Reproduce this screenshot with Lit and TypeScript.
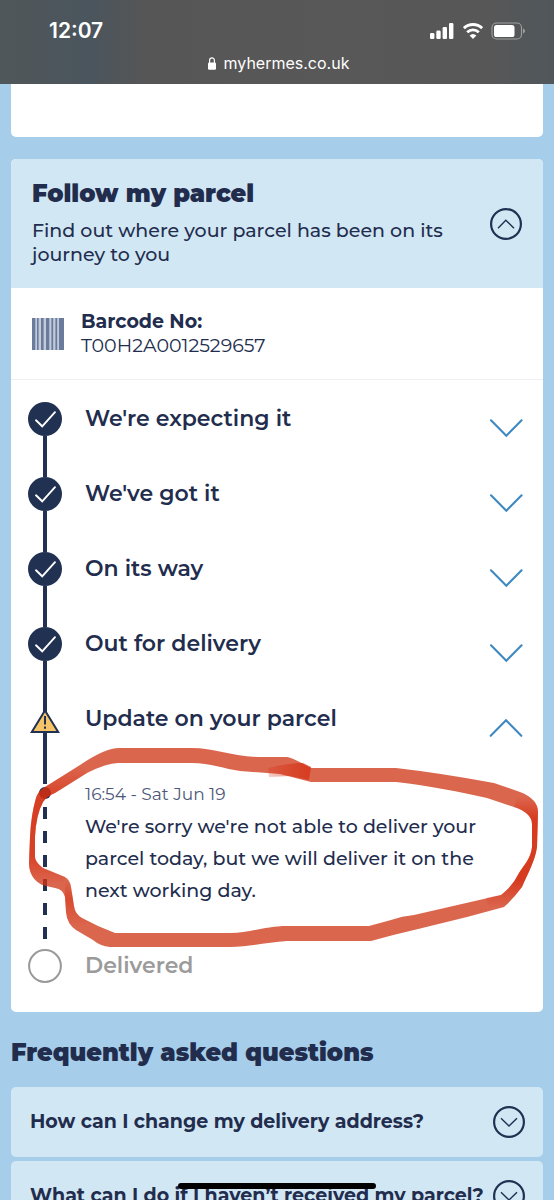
import { LitElement, html, css, svg, nothing } from "lit";
import { customElement, property } from "lit/decorators.js";
import { classMap } from "lit/directives/class-map.js";

const chevron = (up: boolean) => html`
  <svg class="chevron" width="34" height="20" viewBox="0 0 34 20" aria-hidden="true">
    <path d=${up ? "M1.7 17.8 17 2.3 32.3 17.8" : "M2 2.3 17.3 17.7 32.6 2.3"} />
  </svg>
`;

const ringChevron = (up: boolean) => html`
  <svg class="ring" width="32" height="32" viewBox="0 0 32 32" aria-hidden="true">
    <circle cx="16" cy="16" r="14.9" />
    <path d=${up ? "M8 20.2 15.8 12.2 24 20.2" : "M8 12.2 16 20 24 12.2"} />
  </svg>
`;

type StepState = "done" | "alert" | "pending";

interface Step {
  title: string;
  state: StepState;
  time?: string;
  note?: string;
}

const STEPS: Step[] = [
  { title: "We're expecting it", state: "done" },
  { title: "We've got it", state: "done" },
  { title: "On its way", state: "done" },
  { title: "Out for delivery", state: "done" },
  {
    title: "Update on your parcel",
    state: "alert",
    time: "16:54 - Sat Jun 19",
    note: "We're sorry we're not able to deliver your parcel today, but we will deliver it on the next working day.",
  },
  { title: "Delivered", state: "pending" },
];

const QUESTIONS = [
  "How can I change my delivery address?",
  "What can I do if I haven’t received my parcel?",
];

@customElement("status-bar")
export class StatusBar extends LitElement {
  static styles = css`
    :host {
      display: block;
      color: #fff;
      font-family: Inter, "Liberation Sans", sans-serif;
      background: linear-gradient(90deg, #50575a 0%, #4b555d 16%, #565656 27%, #595858 60%, #575757 88%, #50575b 100%);
    }
    .bar {
      display: flex;
      flex-direction: column;
      height: 84px;
      box-sizing: border-box;
      padding-top: 18px;
    }
    .top {
      display: flex;
      align-items: center;
      justify-content: space-between;
      padding: 0 29px 0 49px;
    }
    .time {
      font-size: 21px;
      line-height: 26px;
      font-weight: 600;
    }
    .signals {
      display: flex;
      align-items: center;
      gap: 8px;
    }
    .address {
      display: flex;
      align-items: center;
      justify-content: center;
      gap: 8px;
      margin-top: 8px;
      padding-left: 3px;
      font-size: 16px;
      line-height: 22px;
      font-weight: 400;
    }
    svg {
      display: block;
    }
  `;

  render() {
    return html`
      <header class="bar">
        <div class="top">
          <time class="time">12:07</time>
          <div class="signals">
            <svg width="25" height="18" viewBox="0 0 25 18" fill="#fff" role="img" aria-label="Signal">
              <rect x="0" y="11" width="4.4" height="6" rx="1.3" />
              <rect x="6.3" y="8.6" width="4.4" height="8.4" rx="1.3" />
              <rect x="12.6" y="5" width="4.4" height="12" rx="1.3" />
              <rect x="19" y="1" width="4.4" height="16" rx="1.3" />
            </svg>
            <svg width="20" height="18" viewBox="0 0 20 18" role="img" aria-label="Wi-Fi">
              <g fill="none" stroke="#fff" stroke-width="2.9">
                <path d="M.9 6.2a13 13 0 0 1 18.2 0" />
                <path d="M4.2 10.2a8.4 8.4 0 0 1 11.6 0" />
              </g>
              <path d="M6.6 13.5a5 5 0 0 1 6.8 0L10 17z" fill="#fff" />
            </svg>
            <svg width="34" height="18" viewBox="0 0 34 18" role="img" aria-label="Battery">
              <rect x="1" y="1" width="29.5" height="16" rx="4.5" fill="none" stroke="#a0a0a0" stroke-width="1.1" />
              <rect x="3" y="3" width="20.5" height="12" rx="2.6" fill="#fff" />
              <path d="M32 6.4q2 .8 2 2.6t-2 2.6z" fill="#a0a0a0" />
            </svg>
          </div>
        </div>
        <div class="address">
          <svg width="8" height="13" viewBox="0 0 8 13" aria-hidden="true">
            <rect x="0" y="5.6" width="8" height="7.2" rx="1.2" fill="#fff" />
            <path d="M1.6 6V3.4a2.4 2.6 0 0 1 4.8 0V6" fill="none" stroke="#fff" stroke-width="1.2" />
          </svg>
          <span>myhermes.co.uk</span>
        </div>
      </header>
    `;
  }
}

@customElement("tracking-step")
export class TrackingStep extends LitElement {
  @property({ attribute: false }) step!: Step;

  static styles = css`
    :host {
      display: block;
    }
    .row {
      display: grid;
      grid-template-columns: 34px 1fr;
      column-gap: 23px;
    }
    .row.done {
      min-height: 75px;
    }
    .row.alert {
      min-height: 82px;
    }
    .rail {
      display: flex;
      flex-direction: column;
      align-items: center;
    }
    .rail svg {
      display: block;
      flex: none;
    }
    .line {
      flex: 1;
      width: 4px;
      background: #203151;
    }
    .head {
      display: flex;
      align-items: flex-start;
      justify-content: space-between;
      width: 100%;
      padding: 0;
      border: 0;
      background: none;
      color: #222d4e;
      font: inherit;
      text-align: left;
      cursor: pointer;
    }
    .title {
      margin: 0;
      font-size: 22px;
      line-height: 34px;
      font-weight: 650;
    }
    .pending .title {
      color: #9b9b9b;
    }
    .chevron {
      flex: none;
      margin-top: 16px;
      fill: none;
      stroke: #3f88c0;
      stroke-width: 2.1;
      stroke-linecap: round;
    }
    .dot {
      flex: none;
      width: 12px;
      height: 12px;
      margin: 3px 0 8px;
      border-radius: 50%;
      background: #203151;
    }
    .dashes {
      flex: 1;
      width: 4px;
      margin-bottom: 9px;
      background: repeating-linear-gradient(#203151 0 12px, transparent 12px 24px);
    }
    .detail {
      padding-bottom: 42px;
    }
    .time {
      display: block;
      font-size: 17px;
      line-height: 20px;
      margin-bottom: 7px;
      color: #4d5879;
    }
    .note {
      margin: 0;
      padding-right: 32px;
      font-size: 19px;
      line-height: 32px;
      font-weight: 500;
      color: #222d4e;
    }
  `;

  private marker(state: StepState) {
    if (state === "alert") {
      return html`<svg width="34" height="34" viewBox="0 0 34 34" role="img" aria-label="Alert">
        <path d="M15 0h4v34h-4z" fill="#203151" />
        <path d="M17 8.4 30.2 30H3.8z" fill="#f6c467" stroke="#203151" stroke-width="2" />
        <path d="M17 14v8.6M17 24.4v2.4" stroke="#203151" stroke-width="2" fill="none" />
      </svg>`;
    }
    if (state === "done") {
      return html`<svg width="34" height="34" viewBox="0 0 34 34" role="img" aria-label="Complete">
        <circle cx="17" cy="17" r="17" fill="#203151" />
        <path d="M8 18.3 14.2 24.3 27 10.2" fill="none" stroke="#fff" stroke-width="1.9" stroke-linecap="round" />
      </svg>`;
    }
    return html`<svg width="34" height="34" viewBox="0 0 34 34" role="img" aria-label="Not yet">
      <circle cx="17" cy="17" r="15.9" fill="none" stroke="#999" stroke-width="2" />
    </svg>`;
  }

  render() {
    const { title, state, time, note } = this.step;
    const pending = state === "pending";
    return html`
      <div class=${classMap({ row: true, [state]: true })}>
        <div class="rail">
          ${this.marker(state)} ${pending ? nothing : html`<span class="line"></span>`}
        </div>
        ${pending
          ? html`<h3 class="title">${title}</h3>`
          : html`<div>
              <button class="head" aria-expanded=${note ? "true" : "false"}>
                <span class="title">${title}</span>${chevron(!!note)}
              </button>
            </div>`}
      </div>
      ${note
        ? html`<div class="row">
            <div class="rail"><span class="dot"></span><span class="dashes"></span></div>
            <div class="detail">
              <time class="time">${time}</time>
              <p class="note">${note}</p>
            </div>
          </div>`
        : nothing}
    `;
  }
}

@customElement("app-root")
export class AppRoot extends LitElement {
  static styles = css`
    :host {
      display: block;
      height: 100vh;
      overflow: hidden;
      background: #a6ceea;
      color: #222d4e;
      font-family: Montserrat, Inter, "Open Sans", sans-serif;
    }
    .page {
      padding: 0 11px;
    }
    .previous {
      height: 53px;
      margin-bottom: 22px;
      border-radius: 0 0 5px 5px;
      background: #fff;
    }
    .card {
      position: relative;
      border-radius: 5px;
      background: #fff;
    }
    .card-head {
      display: flex;
      align-items: center;
      justify-content: space-between;
      gap: 20px;
      padding: 21px;
      border-radius: 5px 5px 0 0;
      background: #d2e7f4;
    }
    .heading {
      margin: 0;
      font-size: 24px;
      line-height: 28px;
      font-weight: 900;
    }
    .lead {
      margin: 11px 0 0;
      font-size: 19px;
      line-height: 24px;
      font-weight: 500;
    }
    .ring-button {
      flex: none;
      padding: 0;
      border: 0;
      background: none;
      cursor: pointer;
    }
    .ring {
      display: block;
      flex: none;
      fill: none;
      stroke: #203151;
      stroke-width: 2.2;
    }
    .ring path {
      stroke-width: 1.4;
    }
    .barcode {
      display: flex;
      align-items: center;
      gap: 17px;
      padding: 22px 21px 21px;
      border-bottom: 1px solid #eeeff2;
    }
    .barcode dl,
    .barcode dd {
      margin: 0;
    }
    .barcode dl {
      font-size: 19px;
      line-height: 24px;
    }
    .barcode dt {
      font-weight: 700;
    }
    .steps {
      margin: 0;
      padding: 22px 20px 29px 17px;
      list-style: none;
    }
    .scribble {
      position: absolute;
      left: 0;
      bottom: 58px;
      width: 100%;
      height: 215px;
      pointer-events: none;
    }
    .faq {
      margin: 27px 0 20px;
    }
    .questions {
      display: grid;
      gap: 4px;
    }
    .question {
      display: flex;
      align-items: center;
      justify-content: space-between;
      height: 70px;
      padding: 0 18px 0 19px;
      border: 0;
      border-radius: 5px;
      background: #d2e7f4;
      color: #222d4e;
      font-family: inherit;
      font-size: 19px;
      line-height: 24px;
      font-weight: 700;
      text-align: left;
      white-space: nowrap;
      cursor: pointer;
    }
    .home-indicator {
      position: fixed;
      left: 50%;
      bottom: 11px;
      width: 198px;
      height: 6px;
      border-radius: 3px;
      background: #000;
      transform: translateX(-50%);
    }
  `;

  private barcodeIcon() {
    const bars = [
      [0, 3.3], [5, 1.6], [9, 2.6], [14, 3.3], [19.4, 1.8], [23.4, 1.8], [27, 5],
    ];
    return html`<svg width="32" height="32" viewBox="0 0 32 32" role="img" aria-label="Barcode">
      <rect width="32" height="32" fill="#c3cbdb" />
      ${bars.map(([x, w]) => svg`<rect x=${x} width=${w} height="32" fill="#6a7b9c" />`)}
    </svg>`;
  }

  private scribble() {
    return html`<svg class="scribble" viewBox="11 739 532 215" preserveAspectRatio="none" aria-hidden="true">
      <defs>
        <linearGradient id="left-fade" gradientUnits="userSpaceOnUse" x1="0" y1="766" x2="0" y2="884">
          <stop offset="0" stop-color="#d4290c" stop-opacity="0" />
          <stop offset=".3" stop-color="#d4290c" stop-opacity=".65" />
          <stop offset=".75" stop-color="#d4290c" stop-opacity=".6" />
          <stop offset="1" stop-color="#d4290c" stop-opacity="0" />
        </linearGradient>
        <linearGradient id="right-fade" gradientUnits="userSpaceOnUse" x1="0" y1="797" x2="0" y2="908">
          <stop offset="0" stop-color="#d4290c" stop-opacity="0" />
          <stop offset=".2" stop-color="#d4290c" stop-opacity=".7" />
          <stop offset=".75" stop-color="#d4290c" stop-opacity=".7" />
          <stop offset="1" stop-color="#d4290c" stop-opacity="0" />
        </linearGradient>
        <linearGradient id="join-fade" gradientUnits="userSpaceOnUse" x1="266" y1="0" x2="311" y2="0">
          <stop offset="0" stop-color="#d4290c" stop-opacity=".2" />
          <stop offset="1" stop-color="#d4290c" stop-opacity=".7" />
        </linearGradient>
        <linearGradient id="bend-fade" gradientUnits="userSpaceOnUse" x1="0" y1="880" x2="0" y2="926">
          <stop offset="0" stop-color="#d4290c" stop-opacity="0" />
          <stop offset=".4" stop-color="#d4290c" stop-opacity=".45" />
          <stop offset="1" stop-color="#d4290c" stop-opacity="0" />
        </linearGradient>
      </defs>
      <path
        fill="#d03617"
        fill-opacity=".76"
        fill-rule="evenodd"
        d="M36 798Q38 791 45 787L80 765Q105 748 119 748H192C215 748 232 757 262 757H287Q291 757 311 768H396Q440 773 494 783L520 792Q538 799 538 812L537 847C535 861 528 873 522 887Q513 899 504 907L467 917 414 930Q392 935 371 941H287C268 942 250 947 230 947H110Q100 946 93 940L76 930Q67 924 66 912L65 897Q63 889 55 888L42 885Q29 878 29 863L30 837Q31 815 36 798Z
           M43 802Q47 796 55 793L87 773Q107 763 118 763H192C210 763 225 769 240 771L280 774 311 782H396C430 786 460 792 487 798L514 807Q532 813 532 824V847C531 858 524 865 519 873Q513 886 501 895L414 915Q402 916 391 920L369 926H287C265 926 250 933 230 933H115L98 926 82 918Q75 914 74 906L71 887Q70 880 65 877L43 868Q35 862 35 857V837Q36 815 43 802Z"
      />
      <path fill="url(#left-fade)" d="M36 798Q38 791 45 787L80 765 87 773 55 793Q47 796 43 802Q36 815 35 837V857Q36 863 43 868L65 877 62 889 42 885Q29 878 29 863L30 837Q31 815 36 798Z" />
      <path fill="url(#right-fade)" d="M520 792Q538 799 538 812L537 847C535 861 528 873 522 887Q513 899 504 907L490 911 486 898 501 895Q513 886 519 873C524 865 531 858 532 847V824Q532 813 514 807Z" />
      <path fill="url(#join-fade)" d="M268 768Q288 763 303 763L311 767 309 780 290 776 269 777Z" />
      <path fill="url(#bend-fade)" d="M65 877Q70 880 71 887L74 906Q75 914 82 918L98 926 93 940 76 930Q67 924 66 912L65 897Z" />
    </svg>`;
  }

  render() {
    return html`
      <status-bar></status-bar>
      <main class="page">
        <div class="previous"></div>
        <section class="card">
          <div class="card-head">
            <div>
              <h2 class="heading">Follow my parcel</h2>
              <p class="lead">Find out where your parcel has been on its journey to you</p>
            </div>
            <button class="ring-button" aria-label="Collapse parcel journey" aria-expanded="true">
              ${ringChevron(true)}
            </button>
          </div>
          <div class="barcode">
            ${this.barcodeIcon()}
            <dl>
              <dt>Barcode No:</dt>
              <dd>T00H2A0012529657</dd>
            </dl>
          </div>
          <ol class="steps">
            ${STEPS.map((step) => html`<li><tracking-step .step=${step}></tracking-step></li>`)}
          </ol>
          ${this.scribble()}
        </section>
        <h2 class="heading faq">Frequently asked questions</h2>
        <div class="questions">
          ${QUESTIONS.map(
            (q) => html`<button class="question" aria-expanded="false"><span>${q}</span>${ringChevron(false)}</button>`
          )}
        </div>
      </main>
      <div class="home-indicator"></div>
    `;
  }
}
